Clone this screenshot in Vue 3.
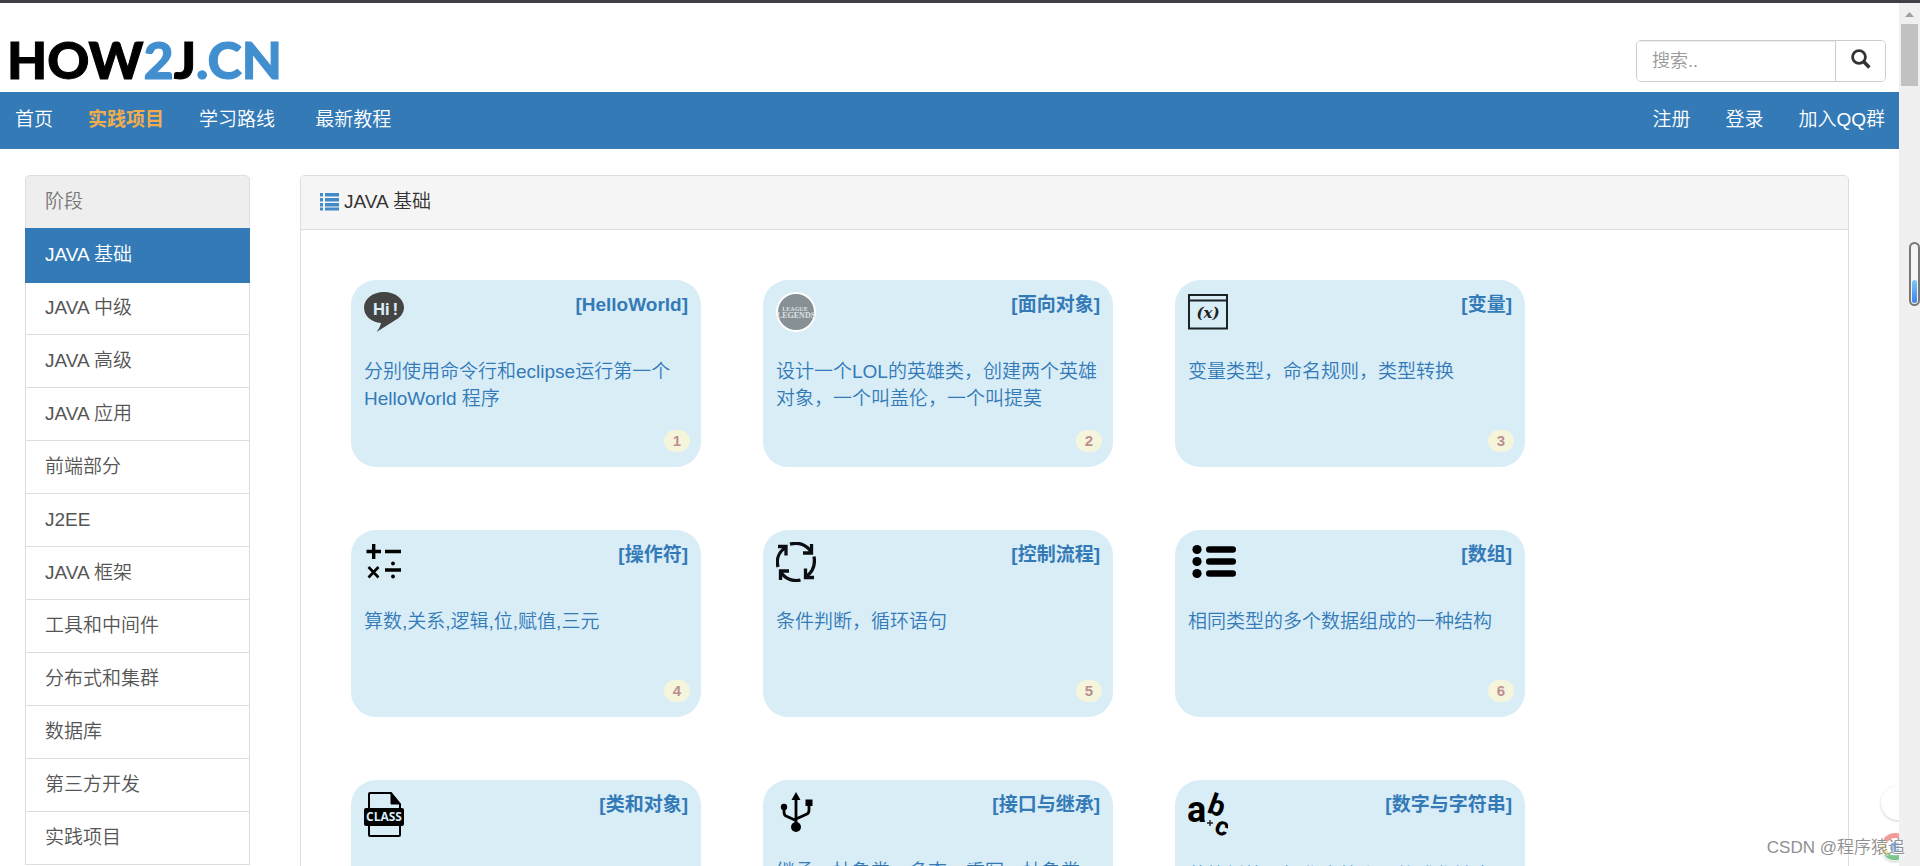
<script setup>
import { ref } from 'vue'

const keyword = ref('')
const active = ref('JAVA 基础')

const leftNav = [
  { label: '首页' },
  { label: '实践项目', hot: true },
  { label: '学习路线\u00a0' },
  { label: '最新教程' },
]
const rightNav = ['注册', '登录', '加入QQ群']

const stages = [
  'JAVA 基础', 'JAVA 中级', 'JAVA 高级', 'JAVA 应用', '前端部分', 'J2EE',
  'JAVA 框架', '工具和中间件', '分布式和集群', '数据库', '第三方开发', '实践项目',
]

const cards = [
  { icon: 'hi', title: 'HelloWorld', desc: '分别使用命令行和eclipse运行第一个HelloWorld 程序' },
  { icon: 'lol', title: '面向对象', desc: '设计一个LOL的英雄类，创建两个英雄对象，一个叫盖伦，一个叫提莫' },
  { icon: 'var', title: '变量', desc: '变量类型，命名规则，类型转换' },
  { icon: 'ops', title: '操作符', desc: '算数,关系,逻辑,位,赋值,三元' },
  { icon: 'flow', title: '控制流程', desc: '条件判断，循环语句' },
  { icon: 'array', title: '数组', desc: '相同类型的多个数据组成的一种结构' },
  { icon: 'class', title: '类和对象', desc: '引用，方法重载，构造方法，包，修饰符' },
  { icon: 'usb', title: '接口与继承', desc: '继承，抽象类，多态，重写，抽象类，对象转型' },
  { icon: 'abc', title: '数字与字符串', desc: '装箱拆箱，操作字符串，格式化输出' },
]
</script>

<template>
  <div class="window">
    <div class="page">
      <header class="top">
        <a class="logo" href="#">HOW<span>2</span>J<span>.CN</span></a>
        <form class="search" role="search" @submit.prevent>
          <input v-model="keyword" type="text" placeholder="搜索.." aria-label="搜索" />
          <button type="submit" aria-label="搜索">
            <svg width="20" height="20" viewBox="0 0 20 20" fill="none" stroke="#333">
              <circle cx="8" cy="8" r="6.4" stroke-width="2.8" />
              <path d="M12.8 12.8L18.4 18.4" stroke-width="3.6" />
            </svg>
          </button>
        </form>
      </header>

      <nav class="bar">
        <div class="links">
          <a v-for="n in leftNav" :key="n.label" href="#" :class="{ hot: n.hot }">{{ n.label }}</a>
        </div>
        <div class="links">
          <a v-for="n in rightNav" :key="n" href="#">{{ n }}</a>
        </div>
      </nav>

      <div class="body">
        <aside class="side">
          <div class="item head">阶段</div>
          <a
            v-for="s in stages"
            :key="s"
            href="#"
            class="item"
            :class="{ active: s === active }"
            @click.prevent="active = s"
          >{{ s }}</a>
        </aside>

        <main class="panel">
          <h1 class="panel-head">
            <svg width="19" height="18" viewBox="0 0 19 18" fill="#428bca" aria-hidden="true">
              <path d="M0 0h3v3.500H0zM5 0h14v3.500H5zM0 5h3v3.500H0zM5 5h14v3.500H5zM0 10h3v3.500H0zM5 10h14v3.500H5zM0 14.500h3v3H0zM5 14.500h14v3H5z" />
            </svg>
            JAVA 基础
          </h1>
          <div class="cards">
            <a v-for="(c, i) in cards" :key="c.title" href="#" class="card">
              <div class="card-top">
                <svg v-if="c.icon === 'hi'" width="40" height="40" viewBox="0 0 40 40">
                  <path d="M20 0C31 0 40 6.800 40 15.500C40 20 37.500 24 33.500 26.800L12.500 40C14.500 37.500 16.500 34 17 31C7.500 30.500 0 24 0 15.500C0 6.800 9 0 20 0Z" fill="#444" />
                  <text x="9" y="23" class="t-hi">Hi</text>
                  <text x="29" y="23" class="t-hi">!</text>
                </svg>
                <svg v-else-if="c.icon === 'lol'" width="40" height="40" viewBox="0 0 40 40">
                  <circle cx="20" cy="20" r="20" fill="#fff" />
                  <circle cx="20" cy="20" r="18" fill="#869095" />
                  <text x="19" y="19" class="t-lol" font-size="6">LEAGUE</text>
                  <text x="20" y="26" class="t-lol" font-size="8">LEGENDS</text>
                </svg>
                <svg v-else-if="c.icon === 'var'" width="40" height="40" viewBox="0 0 40 40">
                  <path d="M1 3H39V36.500H1ZM1 8.500H39" fill="none" stroke="#1c2124" stroke-width="2" />
                  <text x="20" y="26" class="t-var">(x)</text>
                </svg>
                <svg v-else-if="c.icon === 'ops'" width="40" height="40" viewBox="0 0 40 40" stroke="#000" fill="none">
                  <path d="M2.500 9.500H17M9.700 2V17M21 9.500H37M21 28H37" stroke-width="3.400" />
                  <path d="M4.500 25L14.500 35.500M14.500 25L4.500 35.500" stroke-width="2.600" />
                  <circle cx="29" cy="21.500" r="1.900" fill="#000" stroke="none" />
                  <circle cx="29" cy="34.500" r="1.900" fill="#000" stroke="none" />
                </svg>
                <svg v-else-if="c.icon === 'flow'" width="40" height="40" viewBox="0 0 40 40" stroke="#0c0f11" fill="none" stroke-width="3.300">
                  <path d="M2 25C0 17 3 10 9 6" /><path d="M2 4.500H10V13.500" />
                  <path d="M14 2.200C23 -0.500 31 3 35 10" /><path d="M35.500 2V11H27" />
                  <path d="M38 14.500C39.500 23 36 30 31 34" /><path d="M29.500 26.500V35.500H38" />
                  <path d="M24.500 38C16 40 8 36 5 30" /><path d="M4.500 38V29H13" />
                </svg>
                <svg v-else-if="c.icon === 'array'" width="50" height="40" viewBox="0 0 50 40">
                  <g v-for="y in [7.5, 19.5, 31.5]" :key="y">
                    <circle cx="9" :cy="y" r="4.600" />
                    <rect x="18" :y="y - 3.3" width="30" height="6.600" rx="3.300" />
                  </g>
                </svg>
                <svg v-else-if="c.icon === 'class'" width="40" height="45" viewBox="0 0 40 45">
                  <path d="M5 17V2Q5 1 6 1H27L36 12V43Q36 44 35 44H6Q5 44 5 43V32" fill="none" stroke="#000" stroke-width="2" />
                  <path d="M27 1V12H36Z" stroke="#000" />
                  <rect x="0" y="16" width="40" height="18" rx="2" />
                  <text x="20" y="29" class="t-class">CLASS</text>
                </svg>
                <svg v-else-if="c.icon === 'usb'" width="40" height="40" viewBox="0 0 40 40">
                  <path d="M20 6V34M8 15V20Q8 23 10 24L20 28.500M33 11V18Q33 21 31 22L20 27" fill="none" stroke="#000" stroke-width="2.800" />
                  <path d="M20 0L24.500 8H15.500ZM29.500 7.500H36.500V14H29.500Z" />
                  <circle cx="8" cy="15" r="3.200" />
                  <circle cx="20" cy="35" r="5" />
                </svg>
                <svg v-else width="40" height="44" viewBox="0 0 40 44">
                  <text x="-1" y="30" class="t-a">a</text>
                  <text x="18" y="20" class="t-b" transform="rotate(20 18 20)">b</text>
                  <text x="25" y="40" class="t-c" transform="rotate(22 25 40)">c</text>
                  <path d="M22 28V34M19 31H25" stroke="#222" stroke-width="1.400" />
                </svg>
                <strong>[{{ c.title }}]</strong>
              </div>
              <p>{{ c.desc }}</p>
              <span class="badge">{{ i + 1 }}</span>
            </a>
          </div>
        </main>
      </div>

      <div class="float upper"></div>
      <div class="float lower">
        <svg width="28" height="28" viewBox="0 0 28 28" fill="none" stroke-width="5" aria-hidden="true">
          <path d="M4.500 8A11 11 0 0 1 23.500 8" stroke="#f29b98" />
          <path d="M4.500 8A11 11 0 0 0 5.500 21" stroke="#f8df7a" />
          <path d="M5.500 21A11 11 0 0 0 23 20" stroke="#7cc58b" />
          <circle cx="14" cy="14" r="5" fill="#7eaaf0" stroke="none" />
        </svg>
      </div>
    </div>

    <div class="scroll" aria-hidden="true">
      <svg width="9" height="5" viewBox="0 0 9 5"><path d="M0 5L4.500 0L9 5Z" fill="#a0a0a0" /></svg>
      <div class="thumb"></div>
    </div>
    <div class="gauge" aria-hidden="true"><i></i></div>
    <div class="mark">CSDN @程序猿追</div>
  </div>
</template>

<style>
body {
  background: #fff;
}
</style>

<style scoped>
* {
  box-sizing: border-box;
}
.window {
  position: relative;
  display: flex;
  height: 100vh;
  overflow: hidden;
  border-top: 3px solid #414145;
  font: 350 19px/27px "Liberation Sans", "Noto Sans CJK SC", sans-serif;
  color: #333;
}
a {
  color: #337ab7;
  text-decoration: none;
}
.page {
  position: relative;
  flex: 1;
  min-width: 0;
  overflow: hidden;
}
.top {
  display: flex;
  justify-content: space-between;
  align-items: center;
  height: 89px;
  padding: 27px 13px 0 7px;
}
.logo {
  padding-bottom: 4px;
  font: 900 52px/58px Lato, sans-serif;
  color: #000;
  -webkit-text-stroke: 1px currentColor;
}
.logo span {
  color: #428fd0;
}
.search {
  display: flex;
  width: 250px;
  height: 42px;
  border: 1px solid #ccc;
  border-radius: 5px;
  overflow: hidden;
}
.search input {
  flex: 1;
  min-width: 0;
  padding: 0 15px;
  border: 0;
  outline: 0;
  background: #fff;
  box-shadow: inset 0 1px 1px rgba(0, 0, 0, 0.08);
  font: inherit;
  font-size: 18px;
}
.search input::placeholder {
  color: #999;
}
.search button {
  display: flex;
  justify-content: center;
  width: 50px;
  padding: 8px 0 0;
  border: 0;
  border-left: 1px solid #ccc;
  background: #fff;
}
.bar {
  display: flex;
  justify-content: space-between;
  height: 57px;
  padding: 0 14px 0 15px;
  background: #337ab7;
}
.links {
  display: flex;
  gap: 35px;
  line-height: 56px;
}
.links a {
  color: #fff;
}
.links .hot {
  color: #f0ad4e;
  font-weight: 700;
}
.body {
  display: flex;
  align-items: flex-start;
  gap: 50px;
  padding: 26px 50px 0 25px;
}
.side {
  flex: 0 0 225px;
}
.item {
  display: block;
  height: 54px;
  margin-bottom: -1px;
  padding: 12px 19px;
  border: 1px solid #ddd;
  color: #555;
}
.item.head {
  border-radius: 5px 5px 0 0;
  background: #eee;
  color: #777;
}
.item.active {
  position: relative;
  height: 55px;
  margin-bottom: -2px;
  border-color: #337ab7;
  background: #337ab7;
  color: #fff;
}
.panel {
  flex: 1;
  min-width: 0;
  border: 1px solid #ddd;
  border-radius: 5px;
}
.panel-head {
  display: flex;
  align-items: center;
  gap: 5px;
  height: 54px;
  margin: 0;
  padding: 0 19px 2px;
  border-bottom: 1px solid #ddd;
  border-radius: 4px 4px 0 0;
  background: #f5f5f5;
  font-size: 19px;
  font-weight: 350;
}
.cards {
  display: grid;
  grid-template-columns: repeat(auto-fill, 350px);
  gap: 63px 62px;
  padding: 50px;
}
.card {
  position: relative;
  height: 187px;
  padding: 12px 13px;
  border-radius: 25px;
  background: #d9edf7;
}
.card-top {
  display: flex;
  justify-content: space-between;
  align-items: flex-start;
}
.card-top svg {
  flex: none;
}
.card-top strong {
  font-weight: 700;
  line-height: 25px;
}
.card p {
  margin: 26px -4px 0 0;
}
.badge {
  position: absolute;
  right: 11px;
  bottom: 15px;
  width: 26px;
  border-radius: 11px;
  background: #f5f5dc;
  color: #bc8f8f;
  font-size: 15px;
  font-weight: 700;
  line-height: 22px;
  text-align: center;
}
.t-hi {
  fill: #d9edf7;
  font: 700 17px Roboto, sans-serif;
}
.t-lol {
  fill: #dde2e4;
  font-family: "Liberation Serif", serif;
  font-weight: 700;
  text-anchor: middle;
}
.t-var {
  fill: #222;
  font: italic 700 15px "DejaVu Serif", serif;
  text-anchor: middle;
}
.t-class {
  fill: #d9edf7;
  font: 700 12px "Open Sans", sans-serif;
  text-anchor: middle;
}
.t-a {
  font: 700 36px Roboto, sans-serif;
}
.t-b {
  font: 700 29px Roboto, sans-serif;
}
.t-c {
  font: 700 26px Roboto, sans-serif;
}
.float {
  position: absolute;
  border-radius: 50%;
  background: #fff;
  box-shadow: 0 1px 3px rgba(0, 0, 0, 0.2);
}
.upper {
  right: -16px;
  bottom: 46px;
  width: 34px;
  height: 34px;
}
.lower {
  right: -10px;
  bottom: 5px;
  width: 28px;
  height: 28px;
}
.lower svg {
  display: block;
}
.scroll {
  flex: 0 0 21px;
  display: flex;
  flex-direction: column;
  align-items: center;
  gap: 7px;
  padding-top: 9px;
  background: #f0f0f0;
}
.thumb {
  width: 17px;
  height: 62px;
  background: #c1c1c1;
}
.gauge {
  position: absolute;
  top: 239px;
  right: 0;
  display: flex;
  align-items: flex-end;
  width: 11px;
  height: 64px;
  padding: 1px;
  border: 2px solid #777;
  border-radius: 6px;
  background: #f4f4f4;
}
.gauge i {
  flex: 1;
  height: 23px;
  border-radius: 3px;
  background: linear-gradient(#7ccaf8, #3b82f0);
}
.mark {
  position: absolute;
  right: 15px;
  bottom: 5px;
  color: #909090;
  font-size: 17px;
  text-shadow: 1px 1px 1px #fff;
}
</style>
